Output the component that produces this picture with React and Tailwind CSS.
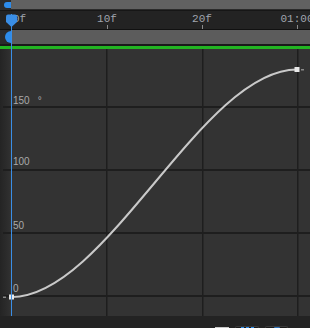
import React from "react";

const rulerMarks = [
  { x: 107, label: "10f" },
  { x: 202, label: "20f" },
  { x: 297, label: "01:00" },
];

const valueLabels = [
  { top: 47, label: "150", unit: true },
  { top: 108, label: "100" },
  { top: 172, label: "50" },
  { top: 235, label: "0" },
];

function Ruler() {
  return (
    <div className="relative h-[18px] bg-[#232323] font-['Liberation_Mono',monospace] text-[11px] leading-none text-[#a0a5ae]">
      <span className="absolute left-[13px] top-[3px]">0f</span>
      {rulerMarks.map((m) => (
        <React.Fragment key={m.label}>
          <span className="absolute top-[3px] -translate-x-1/2 whitespace-nowrap" style={{ left: m.x }}>
            {m.label}
          </span>
          <div className="absolute bottom-0 h-[4px] w-[1px] bg-[#8a8a8a]" style={{ left: m.x }} />
        </React.Fragment>
      ))}
    </div>
  );
}

function Graph() {
  return (
    <div className="relative flex h-[267px] bg-[#333333]">
      <div className="w-[10px] h-full bg-gradient-to-r from-[#242424] to-[#303030]" />
      <svg className="absolute inset-0" width="310" height="267">
        {/* grid */}
        {[58, 121, 184, 247].map((y) => (
          <rect key={y} x="3" y={y - 1} width="307" height="2" fill="#1e1e1e" />
        ))}
        {[106, 202, 297].map((x) => (
          <rect key={x} x={x} y="0" width="1.5" height="267" fill="#1e1e1e" />
        ))}
        {/* curve */}
        <path
          d="M11.5 248 C106.5 248 202 20.5 297 20.5"
          fill="none"
          stroke="#c9c9c9"
          strokeWidth="2"
        />
        {/* key handles */}
        <rect x="3" y="247.5" width="3" height="1.5" fill="#8a8a8a" />
        <rect x="301" y="20" width="3" height="1.5" fill="#8a8a8a" />
        <rect x="9" y="245.5" width="5" height="5" fill="#e8e8e8" />
        <rect x="294.5" y="18" width="5" height="5" fill="#e8e8e8" />
      </svg>
      {valueLabels.map((v) => (
        <span
          key={v.label}
          className="absolute left-[13px] font-['Liberation_Sans',sans-serif] text-[10px] leading-none text-[#a9a9a9]"
          style={{ top: v.top }}
        >
          {v.label}
          {v.unit && <span className="ml-[8px]">°</span>}
        </span>
      ))}
    </div>
  );
}

export default function App() {
  return (
    <div className="relative flex h-[328px] w-[310px] flex-col overflow-hidden bg-[#232323]">
      {/* top scroll bar */}
      <div className="flex h-[10px] bg-[#2b2b2b]">
        <div className="w-[4px]" />
        <div className="my-[2px] w-[7px] rounded-l-full bg-[#2d8ceb]" />
        <div className="flex-1 mb-[1px] bg-[#616161]" />
      </div>
      <div className="h-[1px] bg-[#161616]" />

      <Ruler />
      <div className="h-[1px] bg-[#111111]" />

      {/* work area bar */}
      <div className="flex h-[14px] bg-[#2b2b2b]">
        <div className="w-[5px]" />
        <div className="my-[1px] w-[6px] rounded-l-full bg-[#2d8ceb]" />
        <div className="flex-1 bg-[#5c5c5c]" />
      </div>
      <div className="h-[2px] bg-[#1a1a1a]" />
      <div className="h-[3px] bg-[#22b422]" />

      <Graph />

      {/* bottom toolbar */}
      <div className="flex flex-1 items-end gap-[6px] bg-[#232323] pl-[215px]">
        <div className="h-[1px] w-[14px] bg-[#c8c8c8]" />
        <div className="flex h-[2px] w-[24px] items-end justify-center gap-[2px] rounded-t-[3px] border-x border-t border-[#3a3a3a] bg-[#1b1b1b]">
          <div className="h-[1px] w-[3px] bg-[#2d8ceb]" />
          <div className="h-[1px] w-[3px] bg-[#2d8ceb]" />
          <div className="h-[1px] w-[3px] bg-[#2d8ceb]" />
        </div>
        <div className="flex h-[2px] w-[23px] items-end justify-center rounded-t-[3px] border-x border-t border-[#3a3a3a] bg-[#1b1b1b]">
          <div className="h-[1px] w-[6px] rounded-t-full bg-[#2a6fb8]" />
        </div>
      </div>

      {/* playhead */}
      <div className="absolute left-[11px] top-[14px] h-[302px] w-[1px] bg-[#3a8ee6]" />
      <svg className="absolute left-[5px] top-[14px]" width="13" height="14" viewBox="0 0 13 14">
        <path d="M1 2.5 Q1 0.5 3 0.5 H10 Q12 0.5 12 2.5 V8 L6.5 13 L1 8 Z" fill="#3a8ee6" />
      </svg>
    </div>
  );
}
